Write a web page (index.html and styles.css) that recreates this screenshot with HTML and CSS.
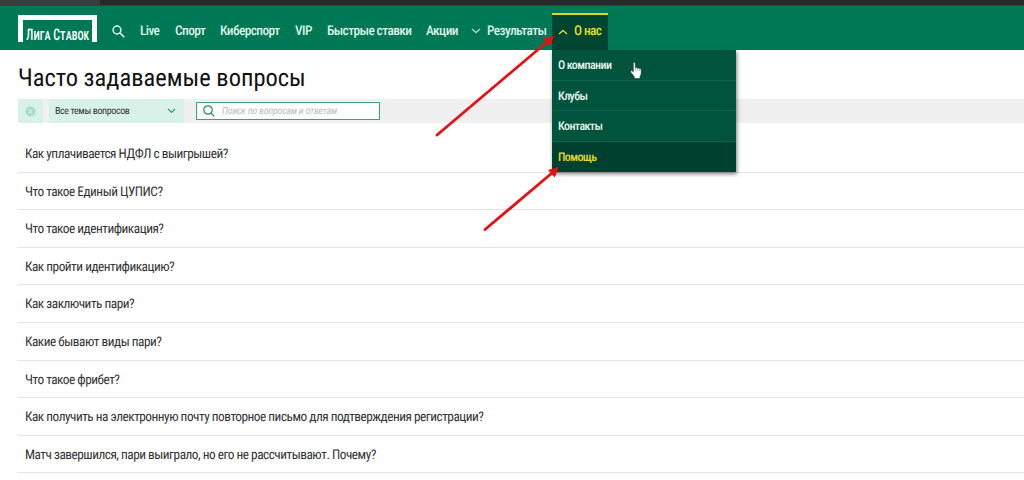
FILE: index.html
```html
<!DOCTYPE html>
<html lang="ru">
<head>
    <meta charset="UTF-8">
    <meta name="viewport" content="width=device-width, initial-scale=1.0">
    <title>Часто задаваемые вопросы</title>
    <link rel="stylesheet" href="styles.css">
</head>
<body>

    <div class="topbar"></div>

    <header class="header">
        <a class="logo"><span>Лига Ставок</span></a>
        <svg class="search-icon" width="13" height="13" viewBox="0 0 13 13" fill="none" stroke="#e2f5ec" stroke-width="1.5">
            <circle cx="5" cy="5" r="3.9"/>
            <path d="M7.9 7.9l4.4 4.4"/>
        </svg>
        <nav class="nav">
            <a class="live">Live</a>
            <a class="sport">Спорт</a>
            <a class="cyber">Киберспорт</a>
            <a class="vip">VIP</a>
            <a class="fast">Быстрые ставки</a>
            <a class="promo">Акции</a>
            <a class="results">
                <svg width="10" height="6" viewBox="0 0 10 6" fill="none" stroke="#a5dcc4" stroke-width="1.3"><path d="M1 1l4 3.6L9 1"/></svg>
                Результаты
            </a>
            <div class="about">
                <a class="about-link">
                    <svg width="10" height="6" viewBox="0 0 10 6" fill="none" stroke="#e0dc22" stroke-width="1.3"><path d="M1 5l4-3.600L9 5"/></svg>
                    О нас
                </a>
                <ul class="menu">
                    <li>О компании</li>
                    <li>Клубы</li>
                    <li>Контакты</li>
                    <li class="active">Помощь</li>
                </ul>
            </div>
        </nav>
    </header>

    <main>
        <h1>Часто задаваемые вопросы</h1>

        <div class="filter">
            <div class="reset">
                <svg width="11" height="11" viewBox="0 0 11 11"><circle cx="5.5" cy="5.5" r="5" fill="#a3dbc6"/><path d="M3.6 3.6l3.8 3.8M7.4 3.6L3.6 7.4" stroke="#d8f2e9" stroke-width="1.2"/></svg>
            </div>
            <div class="topics">
                <span>Все темы вопросов</span>
                <svg width="9" height="6" viewBox="0 0 9 6" fill="none" stroke="#2f9c77" stroke-width="1.2"><path d="M1 1l3.5 3.4L8 1"/></svg>
            </div>
            <div class="search">
                <svg width="12" height="12" viewBox="0 0 12 12" fill="none" stroke="#1c8f68" stroke-width="1.2"><circle cx="5" cy="5" r="4.2"/><path d="M8 8l3.3 3.3"/></svg>
                <span>Поиск по вопросам и ответам</span>
            </div>
        </div>

        <ul class="questions">
            <li>Как уплачивается НДФЛ с выигрышей?</li>
            <li>Что такое Единый ЦУПИС?</li>
            <li>Что такое идентификация?</li>
            <li>Как пройти идентификацию?</li>
            <li>Как заключить пари?</li>
            <li>Какие бывают виды пари?</li>
            <li>Что такое фрибет?</li>
            <li>Как получить на электронную почту повторное письмо для подтверждения регистрации?</li>
            <li>Матч завершился, пари выиграло, но его не рассчитывают. Почему?</li>
        </ul>
    </main>

    <!-- стрелки и курсор поверх страницы -->
    <svg class="overlay" width="1024" height="480" viewBox="0 0 1024 480">
        <g stroke="#e80e12" stroke-width="2.8" stroke-linecap="round" fill="#e80e12">
            <path d="M437 135L547 42"/>
            <path d="M553.500 36.500L549.500 45.500L544 39.200Z" stroke-width="1"/>
            <path d="M485 229.500L552 173"/>
            <path d="M558 168L554.500 176.800L549 170.500Z" stroke-width="1"/>
        </g>
        <path d="M633.300 63.500q0-1.300 1-1.300t1 1.300v4.200q1.500-.7 2 .3q1.500-.4 2 .5q1.800-.3 1.900 1.200v3.500q0 2-1.200 3.300v2h-5.700v-1.800l-3.600-4.500q-.6-1.300.4-1.600q1-.2 2.200 1.300z" fill="#fff" stroke="#26332e" stroke-width=".6"/>
        <path d="M635.300 67.700v3M637.300 68v2.800M639.300 68.600v2.400" stroke="#53625c" stroke-width=".5"/>
    </svg>

</body>
</html>
```
FILE: styles.css
```css
* {
    box-sizing: border-box;
}
body {
    margin: 0;
    height: 480px;
    overflow: hidden;
    background: #fff;
    color: #333;
    font-family: "Roboto Condensed", Roboto, sans-serif;
    font-stretch: 75%;
    font-size: 12px;
    text-rendering: geometricPrecision;
}
ul {
    list-style: none;
    margin: 0;
    padding: 0;
}
svg {
    display: block;
    flex: none;
}
.topbar {
    height: 6px;
    background: linear-gradient(90deg, #3d3d3f 100px, #28282a 100px);
    border-bottom: 1px solid #3d3d3f;
}
.header {
    display: flex;
    height: 44px;
    padding-left: 18px;
    background: #007755;
}
.logo {
    display: flex;
    justify-content: center;
    align-items: flex-end;
    width: 79px;
    height: 27px;
    margin-top: 9px;
    border: 5px solid #fff;
    border-bottom: 0;
    color: #fff;
    font-size: 16px;
    font-weight: 500;
    font-variant: small-caps;
    line-height: 14px;
    white-space: nowrap;
}
.logo span {
    transform: scaleX(0.74);
}
.search-icon {
    margin: 19px 0 0 15px;
}
.nav {
    display: flex;
    padding-top: 7px;
    margin-left: 15px;
    color: #d9f0e6;
    font-size: 13.4px;
    font-weight: 500;
    letter-spacing: -0.6px;
    line-height: 37px;
    white-space: nowrap;
}
.live { width: 35px; }
.sport { width: 45px; }
.cyber { width: 75px; }
.vip { width: 32px; }
.fast { width: 99px; }
.promo { width: 45px; }
.results,
.about-link {
    display: flex;
    align-items: center;
    gap: 6px;
}
.results {
    width: 81px;
    height: 36px;
}
.about {
    position: relative;
}
.about-link {
    width: 56px;
    height: 37px;
    padding: 0 0 2px 6px;
    border-top: 2px solid #d8d81e;
    background: #004531;
    color: #e0dc22;
    line-height: 33px;
}
.menu {
    position: absolute;
    top: 37px;
    left: 0;
    width: 184px;
    background: #00543e;
    box-shadow: 1px 2px 4px rgba(0, 0, 0, 0.5);
    color: #e4f5ed;
    font-size: 12px;
}
.menu li {
    height: 30.6px;
    padding-left: 6px;
    border-bottom: 1px solid #0a664b;
    line-height: 31px;
}
.menu .active {
    border-bottom: 0;
    background: #00402e;
    color: #e0dc22;
}
main {
    padding-left: 18px;
}
h1 {
    height: 49px;
    margin: 0;
    color: #111;
    font-size: 24.5px;
    font-weight: normal;
    line-height: 55px;
}
.filter {
    display: flex;
    align-items: center;
    height: 24px;
    background: #f0f0f0;
}
.reset,
.topics {
    display: flex;
    align-items: center;
    height: 24px;
    background: #d8f2e9;
}
.reset {
    justify-content: center;
    width: 25px;
    margin-right: 6px;
}
.topics {
    justify-content: space-between;
    width: 135px;
    padding: 0 8px 0 6px;
    font-size: 10px;
    letter-spacing: -0.38px;
}
.search {
    display: flex;
    align-items: center;
    gap: 7px;
    width: 184px;
    height: 18px;
    margin-left: 12px;
    padding-left: 6px;
    border: 1px solid #35a17d;
    background: #fff;
    color: #bbb;
    font-size: 10px;
    font-style: italic;
    letter-spacing: -0.25px;
}
.questions {
    padding-top: 12px;
}
.questions li {
    height: 37.6px;
    padding-left: 7px;
    border-bottom: 1px solid #e4e4e4;
    font-size: 13.3px;
    letter-spacing: -0.49px;
    line-height: 39px;
}
.overlay {
    position: absolute;
    top: 0;
    left: 0;
}
```
